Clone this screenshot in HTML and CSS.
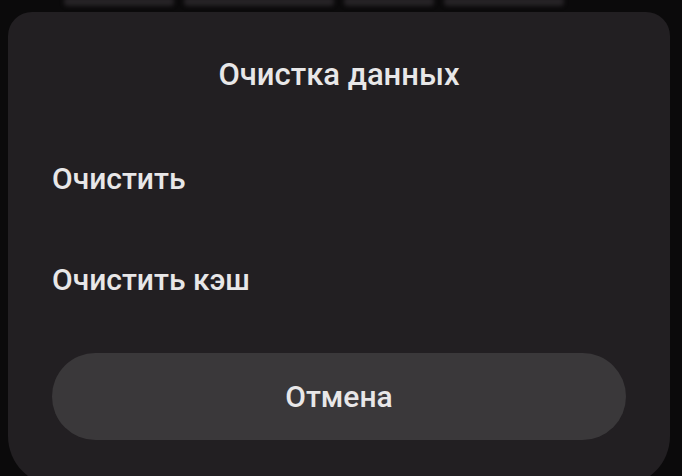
FILE: index.html
```html
<!DOCTYPE html>
<html lang="ru">
<head>
<meta charset="utf-8">
<link rel="stylesheet" href="styles.css">
</head>
<body>
<div class="screen">
  <div class="behind">
    <span class="blob w1"></span>
    <span class="blob w2"></span>
    <span class="blob w3"></span>
    <span class="blob w4"></span>
  </div>
  <div class="dialog">
    <div class="title">Очистка данных</div>
    <div class="item first">Очистить</div>
    <div class="item second">Очистить кэш</div>
    <div class="cancel">Отмена</div>
  </div>
</div>
</body>
</html>
```

FILE: styles.css
```css
html, body {
  margin: 0;
  padding: 0;
  background: #0b0a0b;
  width: 682px;
  height: 476px;
  overflow: hidden;
}
.screen {
  position: relative;
  width: 682px;
  height: 476px;
  font-family: Roboto, "Noto Sans", sans-serif;
  color: #e8e7e8;
}
.behind {
  position: absolute;
  left: 64px;
  top: -3px;
  display: flex;
  gap: 10px;
  filter: blur(2px);
}
.blob {
  display: block;
  height: 9px;
  background: #262326;
  border-radius: 4px;
}
.w1 { width: 110px; }
.w2 { width: 150px; }
.w3 { width: 90px; }
.w4 { width: 120px; }
.dialog {
  position: absolute;
  left: 8px;
  top: 12px;
  width: 662px;
  height: 474px;
  box-sizing: border-box;
  background: #221f22;
  border-radius: 24px 24px 50px 50px;
  padding: 43px 44px 0 44px;
  display: flex;
  flex-direction: column;
}
.title {
  text-align: center;
  font-size: 31px;
  font-weight: 500;
  line-height: 40px;
  height: 40px;
}
.item {
  font-size: 30px;
  font-weight: 500;
  line-height: 40px;
  height: 40px;
}
.first { margin-top: 64px; }
.second { margin-top: 61px; }
.cancel {
  margin-top: 53px;
  height: 87px;
  border-radius: 44px;
  background: #3a383a;
  display: flex;
  align-items: center;
  justify-content: center;
  font-size: 30px;
  font-weight: 500;
}
```
